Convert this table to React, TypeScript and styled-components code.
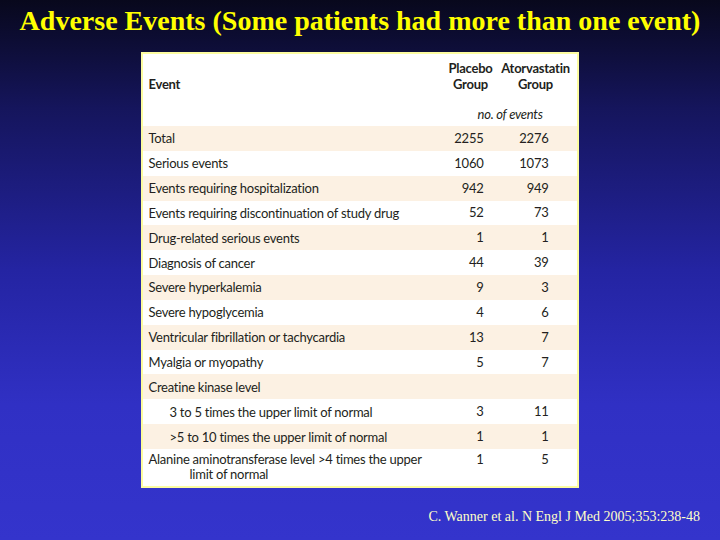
import React from "react";
import styled, { createGlobalStyle } from "styled-components";

const Global = createGlobalStyle`
  *, *::before, *::after { box-sizing: border-box; }
  html, body { margin: 0; padding: 0; }
  body {
    width: 720px;
    height: 540px;
    overflow: hidden;
    background: linear-gradient(to bottom, #08081c 0%, #15155c 20%, #2424a2 50%, #3030c4 75%, #3434cc 100%);
  }
`;

const Slide = styled.div`
  width: 720px;
  height: 540px;
  display: flex;
  flex-direction: column;
  align-items: center;
`;

const Title = styled.h1`
  margin: 4px 0 0;
  height: 48px;
  font-family: "Liberation Serif", "Times New Roman", serif;
  font-weight: bold;
  font-size: 28px;
  line-height: 34px;
  color: #ffff00;
  white-space: nowrap;
`;

const Card = styled.div`
  width: 438px;
  margin-right: 1px;
  background: #ffffff;
  border: 2px solid #fcfca0;
  font-family: "Lato", "Open Sans", sans-serif;
  font-size: 13px;
  letter-spacing: -0.25px;
  color: #231f20;
`;

const Grid = styled.div`
  display: grid;
  grid-template-columns: 1fr 60px 76px;
`;

const Row = styled.div<{ $shade?: boolean; $tall?: boolean }>`
  display: contents;
  & > div {
    background: ${(p) => (p.$shade ? "#fcf1e3" : "#ffffff")};
    height: ${(p) => (p.$tall ? "37px" : "24.85px")};
  }
`;

const Label = styled.div<{ $indent?: number }>`
  padding-left: ${(p) => 6 + (p.$indent ?? 0)}px;
  display: flex;
  align-items: center;
`;

const Hanging = styled.div`
  padding: 3px 0 0 6px;
  line-height: 15px;
  & > span { display: block; padding-left: 41px; }
`;

const Num = styled.div<{ $pr: number; $top?: boolean }>`
  display: flex;
  align-items: ${(p) => (p.$top ? "flex-start" : "center")};
  justify-content: flex-end;
  padding-right: ${(p) => p.$pr}px;
  padding-top: ${(p) => (p.$top ? "3px" : "0")};
  line-height: 15px;
`;

const HeadCell = styled.div<{ $align?: string; $pr?: number }>`
  height: 48px;
  display: flex;
  flex-direction: column;
  justify-content: flex-end;
  align-items: ${(p) => p.$align ?? "center"};
  font-weight: bold;
  line-height: 16px;
  padding-bottom: 10px;
  padding-left: ${(p) => (p.$align === "flex-start" ? "6px" : "0")};
  padding-right: ${(p) => p.$pr ?? 0}px;
  white-space: nowrap;
`;

const UnitRow = styled.div`
  grid-column: 2 / 4;
  height: 24px;
  display: flex;
  align-items: center;
  font-style: italic;
  padding-left: 37px;
`;

const Spacer = styled.div`
  height: 24px;
`;

const Citation = styled.div`
  align-self: flex-end;
  margin: 21px 20px 0 0;
  font-family: "Liberation Serif", "Times New Roman", serif;
  font-size: 14px;
  color: #ffffc8;
`;

type Item = { label: string; a?: string; b?: string; indent?: number };

const items: Item[] = [
  { label: "Total", a: "2255", b: "2276" },
  { label: "Serious events", a: "1060", b: "1073" },
  { label: "Events requiring hospitalization", a: "942", b: "949" },
  { label: "Events requiring discontinuation of study drug", a: "52", b: "73" },
  { label: "Drug-related serious events", a: "1", b: "1" },
  { label: "Diagnosis of cancer", a: "44", b: "39" },
  { label: "Severe hyperkalemia", a: "9", b: "3" },
  { label: "Severe hypoglycemia", a: "4", b: "6" },
  { label: "Ventricular fibrillation or tachycardia", a: "13", b: "7" },
  { label: "Myalgia or myopathy", a: "5", b: "7" },
  { label: "Creatine kinase level" },
  { label: "3 to 5 times the upper limit of normal", a: "3", b: "11", indent: 21 },
  { label: ">5 to 10 times the upper limit of normal", a: "1", b: "1", indent: 21 },
];

export default function App() {
  return (
    <>
      <Global />
      <Slide>
        <Title>Adverse Events (Some patients had more than one event)</Title>
        <Card>
          <Grid>
            <HeadCell $align="flex-start">Event</HeadCell>
            <HeadCell>
              <span>Placebo</span>
              <span>Group</span>
            </HeadCell>
            <HeadCell $pr={6}>
              <span>Atorvastatin</span>
              <span>Group</span>
            </HeadCell>
            <Spacer />
            <UnitRow>no. of events</UnitRow>
            {items.map((it, i) => (
              <Row key={it.label} $shade={i % 2 === 0}>
                <Label $indent={it.indent}>{it.label}</Label>
                <Num $pr={17}>{it.a}</Num>
                <Num $pr={28}>{it.b}</Num>
              </Row>
            ))}
            <Row $tall>
              <Hanging>
                Alanine aminotransferase level &gt;4 times the upper
                <span>limit of normal</span>
              </Hanging>
              <Num $pr={17} $top>1</Num>
              <Num $pr={28} $top>5</Num>
            </Row>
          </Grid>
        </Card>
        <Citation>C. Wanner et al. N Engl J Med 2005;353:238-48</Citation>
      </Slide>
    </>
  );
}
